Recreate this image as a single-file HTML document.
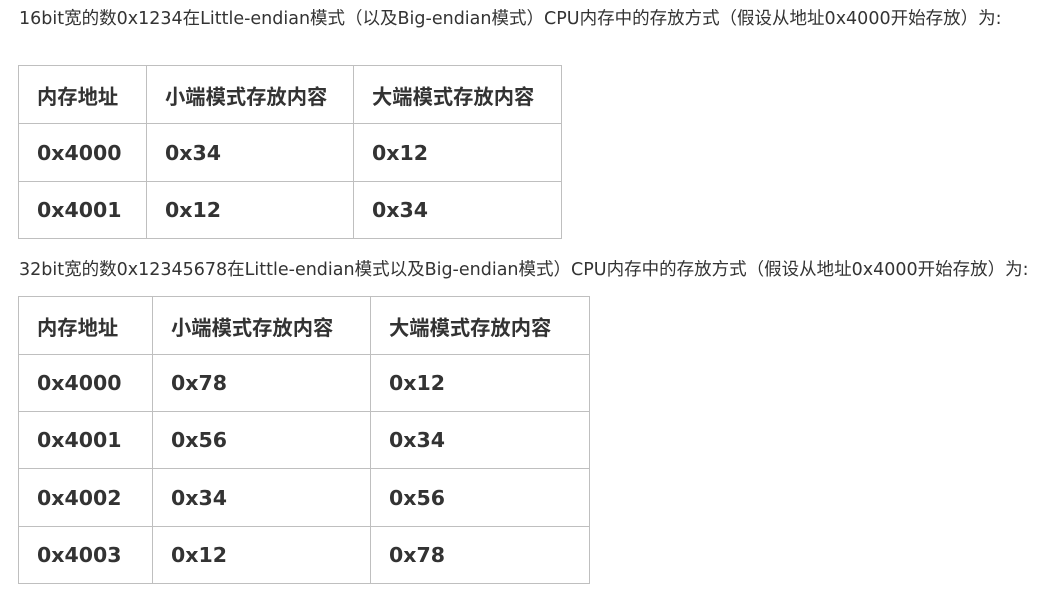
<!DOCTYPE html>
<html><head><meta charset="utf-8"><style>
body{margin:0;background:#fff;color:#333;font-family:"DejaVu Sans","Liberation Sans","Noto Sans CJK SC",sans-serif;}
p{position:absolute;left:19px;margin:0;font-size:17.5px;white-space:nowrap;line-height:20px;}
table{position:absolute;left:18px;border-collapse:collapse;table-layout:fixed;}
td{border:1px solid #bfbfbf;padding:0 0 0 18px;font-weight:bold;font-size:20.5px;white-space:nowrap;vertical-align:middle;}
tr.h td{font-family:"Noto Sans CJK SC",sans-serif;font-size:20.3px;}
</style></head><body>
<p style="top:9px">16bit宽的数0x1234在Little-endian模式（以及Big-endian模式）CPU内存中的存放方式（假设从地址0x4000开始存放）为:</p>
<table style="top:65px;width:544px">
<colgroup><col style="width:128px"><col style="width:207px"><col style="width:208px"></colgroup>
<tr class="h" style="height:58px"><td>内存地址</td><td>小端模式存放内容</td><td>大端模式存放内容</td></tr>
<tr style="height:58px"><td>0x4000</td><td>0x34</td><td>0x12</td></tr>
<tr style="height:57px"><td>0x4001</td><td>0x12</td><td>0x34</td></tr>
</table>
<p style="top:260px">32bit宽的数0x12345678在Little-endian模式以及Big-endian模式）CPU内存中的存放方式（假设从地址0x4000开始存放）为:</p>
<table style="top:296px;width:572px">
<colgroup><col style="width:134px"><col style="width:218px"><col style="width:219px"></colgroup>
<tr class="h" style="height:58px"><td>内存地址</td><td>小端模式存放内容</td><td>大端模式存放内容</td></tr>
<tr style="height:57px"><td>0x4000</td><td>0x78</td><td>0x12</td></tr>
<tr style="height:57px"><td>0x4001</td><td>0x56</td><td>0x34</td></tr>
<tr style="height:58px"><td>0x4002</td><td>0x34</td><td>0x56</td></tr>
<tr style="height:57px"><td>0x4003</td><td>0x12</td><td>0x78</td></tr>
</table>
</body></html>
